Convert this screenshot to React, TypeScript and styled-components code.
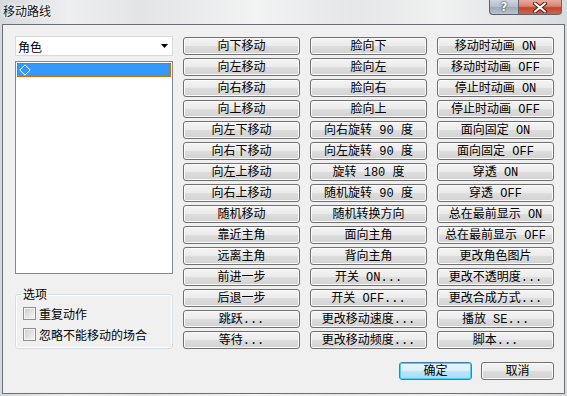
import styled, { createGlobalStyle, css } from 'styled-components'

const commands = [
  '向下移动', '脸向下', '移动时动画 ON',
  '向左移动', '脸向左', '移动时动画 OFF',
  '向右移动', '脸向右', '停止时动画 ON',
  '向上移动', '脸向上', '停止时动画 OFF',
  '向左下移动', '向右旋转 90 度', '面向固定 ON',
  '向右下移动', '向左旋转 90 度', '面向固定 OFF',
  '向左上移动', '旋转 180 度', '穿透 ON',
  '向右上移动', '随机旋转 90 度', '穿透 OFF',
  '随机移动', '随机转换方向', '总在最前显示 ON',
  '靠近主角', '面向主角', '总在最前显示 OFF',
  '远离主角', '背向主角', '更改角色图片',
  '前进一步', '开关 ON...', '更改不透明度...',
  '后退一步', '开关 OFF...', '更改合成方式...',
  '跳跃...', '更改移动速度...', '播放 SE...',
  '等待...', '更改移动频度...', '脚本...',
]

const options = ['重复动作', '忽略不能移动的场合']

const App = () => {
  return (
    <>
      <GlobalStyle />
      <Window>
        <TitleBar>
          <Title>移动路线</Title>
          <CaptionButtons>
            <HelpButton>?</HelpButton>
            <CloseButton>
              <svg width="14" height="11" viewBox="0 0 14 11">
                <path d="M2 1.5 L12 9.5 M12 1.5 L2 9.5" stroke="#5a1a12" strokeWidth="4" strokeLinecap="round" />
                <path d="M2 1.5 L12 9.5 M12 1.5 L2 9.5" stroke="#fff" strokeWidth="2.2" strokeLinecap="round" />
              </svg>
            </CloseButton>
          </CaptionButtons>
        </TitleBar>
        <Client>
          <Main>
            <LeftColumn>
              <Combo>
                <span>角色</span>
                <svg width="7" height="4" viewBox="0 0 7 4">
                  <path d="M0 0 H7 L3.5 4 Z" fill="#000" />
                </svg>
              </Combo>
              <ListBox>
                <ListItem $selected>
                  <svg width="12" height="12" viewBox="0 0 12 12">
                    <path d="M6 0.8 L11.2 6 L6 11.2 L0.8 6 Z" fill="none" stroke="#fff" strokeWidth="1" />
                  </svg>
                </ListItem>
              </ListBox>
              <GroupBox>
                <Legend>选项</Legend>
                {options.map((label) => (
                  <CheckRow key={label}>
                    <CheckBox />
                    <span>{label}</span>
                  </CheckRow>
                ))}
              </GroupBox>
            </LeftColumn>
            <CommandGrid>
              {commands.map((cmd) => (
                <CommandButton key={cmd}>{cmd}</CommandButton>
              ))}
            </CommandGrid>
          </Main>
          <Footer>
            <DialogButton $primary>确定</DialogButton>
            <DialogButton>取消</DialogButton>
          </Footer>
        </Client>
      </Window>
    </>
  )
}

const GlobalStyle = createGlobalStyle`
  html, body {
    margin: 0;
    padding: 0;
  }
  body {
    font-family: "Liberation Mono", "Noto Sans CJK SC", monospace;
    font-size: 12px;
    color: #000;
  }
`

const Window = styled.div`
  width: 567px;
  height: 396px;
  box-sizing: border-box;
  padding: 0 2px 2px 2px;
  display: flex;
  flex-direction: column;
  background: linear-gradient(
    90deg,
    #d6d9db 0%,
    #eceeef 12%,
    #e2e4e5 25%,
    #f2f3f3 45%,
    #e4e6e7 62%,
    #f0f1f1 78%,
    #d9dcde 100%
  );
`

const TitleBar = styled.div`
  height: 24px;
  display: flex;
  justify-content: space-between;
  align-items: flex-start;
`

const Title = styled.div`
  font-family: "Noto Sans CJK SC", sans-serif;
  font-size: 12px;
  line-height: 14px;
  padding: 4px 0 0 1px;
  color: #111;
  text-shadow: 0 0 6px #fff, 0 0 3px #fff;
`

const CaptionButtons = styled.div`
  display: flex;
  margin-right: 3px;
`

const captionBase = css`
  height: 15px;
  box-sizing: border-box;
  display: flex;
  align-items: center;
  justify-content: center;
  border: 1px solid #5d6470;
  border-top: none;
`

const HelpButton = styled.div`
  ${captionBase}
  width: 29px;
  border-right: none;
  border-radius: 0 0 0 4px;
  background: linear-gradient(#cfd6de 0%, #b4bdc9 50%, #9ea9b7 51%, #b9c3cf 100%);
  color: #fff;
  font-family: "DejaVu Sans", sans-serif;
  font-weight: bold;
  font-size: 12px;
  line-height: 12px;
  text-shadow: 0 0 2px #333, 0 0 1px #333;
`

const CloseButton = styled.div`
  ${captionBase}
  width: 44px;
  border-radius: 0 0 4px 0;
  background: linear-gradient(#e8a99c 0%, #d98472 45%, #c3452e 55%, #d2644a 100%);
`

const Client = styled.div`
  flex: 1;
  display: flex;
  flex-direction: column;
  border: 1px solid #6c7075;
  background: #f0f0f0;
  padding: 11px 10px 0 12px;
`

const Main = styled.div`
  display: flex;
  gap: 10px;
`

const LeftColumn = styled.div`
  width: 158px;
  display: flex;
  flex-direction: column;
`

const Combo = styled.div`
  height: 20px;
  box-sizing: border-box;
  display: flex;
  align-items: center;
  justify-content: space-between;
  padding: 0 4px 0 2px;
  background: #fff;
  border: 1px solid #d9d9d9;
  font-family: "Noto Sans CJK SC", sans-serif;
`

const ListBox = styled.div`
  margin-top: 5px;
  height: 213px;
  box-sizing: border-box;
  background: #fff;
  border: 1px solid #828790;
  padding: 1px;
`

const ListItem = styled.div<{ $selected?: boolean }>`
  height: 14px;
  box-sizing: border-box;
  display: flex;
  align-items: center;
  padding-left: 2px;
  background: ${(p) => (p.$selected ? '#3399ff' : 'transparent')};
  outline: ${(p) => (p.$selected ? '1px dotted #c36a00' : 'none')};
  outline-offset: -1px;
`

const GroupBox = styled.fieldset`
  margin: 13px 0 0 0;
  height: 62px;
  box-sizing: border-box;
  padding: 0 6px 0 7px;
  border: 1px solid #d5dfe5;
  border-radius: 3px;
  box-shadow: inset 0 0 0 1px #fff;
  display: flex;
  flex-direction: column;
  gap: 8px;
`

const Legend = styled.legend`
  padding: 0 1px;
  margin-left: -1px;
  font-family: "Noto Sans CJK SC", sans-serif;
  line-height: 14px;
  margin-bottom: 6px;
`

const CheckRow = styled.label`
  display: flex;
  align-items: center;
  gap: 3px;
  height: 13px;
  font-family: "Noto Sans CJK SC", sans-serif;
  line-height: 14px;
`

const CheckBox = styled.span`
  width: 13px;
  height: 13px;
  box-sizing: border-box;
  flex-shrink: 0;
  border: 1px solid #8e8f8f;
  background: linear-gradient(135deg, #cbcbcb 0%, #e2e2e2 50%, #f6f6f6 100%);
  box-shadow: inset 0 0 0 1px #f4f4f4;
`

const CommandGrid = styled.div`
  margin-top: 1px;
  display: grid;
  grid-template-columns: repeat(3, 117px);
  grid-auto-rows: 18px;
  column-gap: 10px;
  row-gap: 3px;
`

const buttonBase = css`
  height: 18px;
  box-sizing: border-box;
  padding: 1px 0 0 0;
  border-radius: 3px;
  font-family: "Liberation Mono", "Noto Sans CJK SC", monospace;
  font-size: 12px;
  line-height: 14px;
  color: #000;
  text-align: center;
  white-space: nowrap;
  cursor: default;
`

const CommandButton = styled.button`
  ${buttonBase}
  border: 1px solid #707070;
  background: linear-gradient(#f4f4f4 0%, #ebebeb 48%, #dddddd 52%, #d2d2d2 100%);
  box-shadow: inset 0 0 0 1px #fbfbfb;
`

const Footer = styled.div`
  margin-top: 13px;
  display: flex;
  justify-content: flex-end;
  gap: 9px;
`

const DialogButton = styled.button<{ $primary?: boolean }>`
  ${buttonBase}
  width: 73px;
  border: 1px solid ${(p) => (p.$primary ? '#3c7fb1' : '#707070')};
  background: ${(p) =>
    p.$primary
      ? 'linear-gradient(#eaf6fd 0%, #d9f0fc 48%, #bee6fd 52%, #a7d9f5 100%)'
      : 'linear-gradient(#f4f4f4 0%, #ebebeb 48%, #dddddd 52%, #d2d2d2 100%)'};
  box-shadow: inset 0 0 0 1px ${(p) => (p.$primary ? '#48d0f7' : '#fbfbfb')};
`

export default App
